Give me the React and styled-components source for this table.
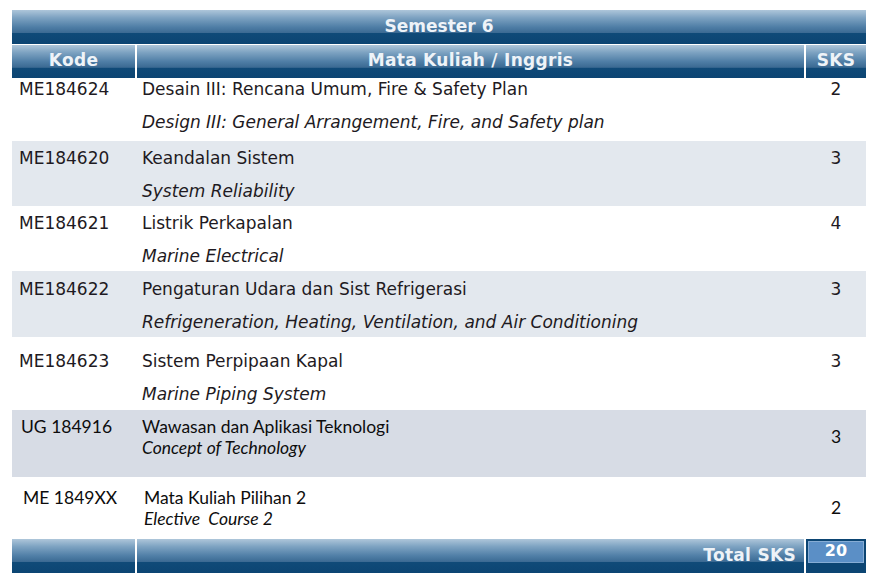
import React from 'react';
import styled, { createGlobalStyle } from 'styled-components';

const courses = [
  { kode: 'ME184624', nama: 'Desain III: Rencana Umum, Fire & Safety Plan', inggris: 'Design III: General Arrangement, Fire, and Safety plan', sks: 2, h: 63, top: 1 },
  { kode: 'ME184620', nama: 'Keandalan Sistem', inggris: 'System Reliability', sks: 3, h: 65, top: 7, shade: true },
  { kode: 'ME184621', nama: 'Listrik Perkapalan', inggris: 'Marine Electrical', sks: 4, h: 65, top: 7 },
  { kode: 'ME184622', nama: 'Pengaturan Udara dan Sist Refrigerasi', inggris: 'Refrigeneration, Heating, Ventilation, and Air Conditioning', sks: 3, h: 66, top: 8, shade: true },
  { kode: 'ME184623', nama: 'Sistem Perpipaan Kapal', inggris: 'Marine Piping System', sks: 3, h: 73, top: 14 },
];

const extra = [
  { kode: 'UG 184916', nama: 'Wawasan dan Aplikasi Teknologi', inggris: 'Concept of Technology', sks: 3, h: 67, top: 6, left: 2, shade: true },
  { kode: 'ME 1849XX', nama: 'Mata Kuliah Pilihan 2', inggris: 'Elective\u00a0 Course 2', sks: 2, h: 62, top: 10, left: 4 },
];

const App = () => {
  return (
    <>
      <GlobalStyle />
      <Table>
        <TitleBar>Semester 6</TitleBar>
        <HeadRow>
          <HeadCell>Kode</HeadCell>
          <HeadCell>Mata Kuliah / Inggris</HeadCell>
          <HeadCell>SKS</HeadCell>
        </HeadRow>
        {courses.map((c) => (
          <Row key={c.kode} $h={c.h} $top={c.top} $shade={c.shade}>
            <Kode>{c.kode}</Kode>
            <Nama>
              <div>{c.nama}</div>
              <English>{c.inggris}</English>
            </Nama>
            <Sks>{c.sks}</Sks>
          </Row>
        ))}
        {extra.map((c) => (
          <CalRow key={c.kode} $h={c.h} $top={c.top} $shade={c.shade}>
            <CalKode $left={c.left}>{c.kode}</CalKode>
            <CalNama $left={c.left}>
              <div>{c.nama}</div>
              <CalEnglish>{c.inggris}</CalEnglish>
            </CalNama>
            <CalSks>{c.sks}</CalSks>
          </CalRow>
        ))}
        <FootRow>
          <HeadCell />
          <TotalLabel>Total SKS</TotalLabel>
          <TotalCell>
            <TotalBox>20</TotalBox>
          </TotalCell>
        </FootRow>
      </Table>
    </>
  );
};

export default App;

const GlobalStyle = createGlobalStyle`
  body {
    margin: 0;
    background: #ffffff;
  }
`;

const barBg = `linear-gradient(to bottom, #aec6da 0%, #7ea3c2 22%, #4f7ea6 50%, #3a6992 68%, #0f4a78 69%, #0c4573 100%)`;

const Table = styled.div`
  margin: 10px 0 0 12px;
  width: 854px;
  font-family: 'DejaVu Sans', Verdana, sans-serif;
  font-size: 17px;
  color: #1e1a22;
`;

const TitleBar = styled.div`
  height: 34px;
  background: ${barBg};
  color: #eef3f8;
  font-weight: bold;
  font-size: 17px;
  text-align: center;
  line-height: 33px;
  margin-bottom: 1px;
`;

const HeadRow = styled.div`
  display: grid;
  grid-template-columns: 123px 1fr 60px;
  column-gap: 2px;
  height: 33px;
`;

const HeadCell = styled.div`
  background: ${barBg};
  color: #eef3f8;
  font-weight: bold;
  font-size: 17px;
  letter-spacing: 0.3px;
  text-align: center;
  line-height: 31px;
`;

const Row = styled.div`
  display: grid;
  grid-template-columns: 123px 1fr 60px;
  column-gap: 2px;
  height: ${(p) => p.$h}px;
  box-sizing: border-box;
  padding-top: ${(p) => p.$top}px;
  background: ${(p) => (p.$shade ? '#e3e8ee' : '#ffffff')};
  line-height: 20px;
`;

const Kode = styled.div`
  padding-left: 7px;
`;

const Nama = styled.div`
  padding-left: 5px;
`;

const English = styled.div`
  font-style: italic;
  margin-top: 13px;
`;

const Sks = styled.div`
  text-align: center;
`;

const CalRow = styled(Row)`
  font-family: Lato, 'Open Sans', sans-serif;
  font-size: 17.5px;
  color: #0d0d0d;
  line-height: 21px;
  background: ${(p) => (p.$shade ? '#d7dce5' : '#ffffff')};
`;

const CalKode = styled.div`
  padding-left: ${(p) => 7 + p.$left}px;
`;

const CalNama = styled.div`
  padding-left: ${(p) => 3 + p.$left}px;
`;

const CalEnglish = styled.div`
  font-style: italic;
`;

const CalSks = styled.div`
  text-align: center;
  padding-top: 10px;
`;

const FootRow = styled(HeadRow)`
  height: 34px;
`;

const TotalLabel = styled(HeadCell)`
  text-align: right;
  padding-right: 8px;
  line-height: 32px;
`;

const TotalCell = styled.div`
  background: #0c4573;
  padding: 2px 2px 0;
`;

const TotalBox = styled.div`
  height: 20px;
  background: #5b8fc6;
  border: 1px solid #86acd4;
  color: #ffffff;
  font-weight: bold;
  font-size: 16px;
  text-align: center;
  line-height: 18px;
`;
